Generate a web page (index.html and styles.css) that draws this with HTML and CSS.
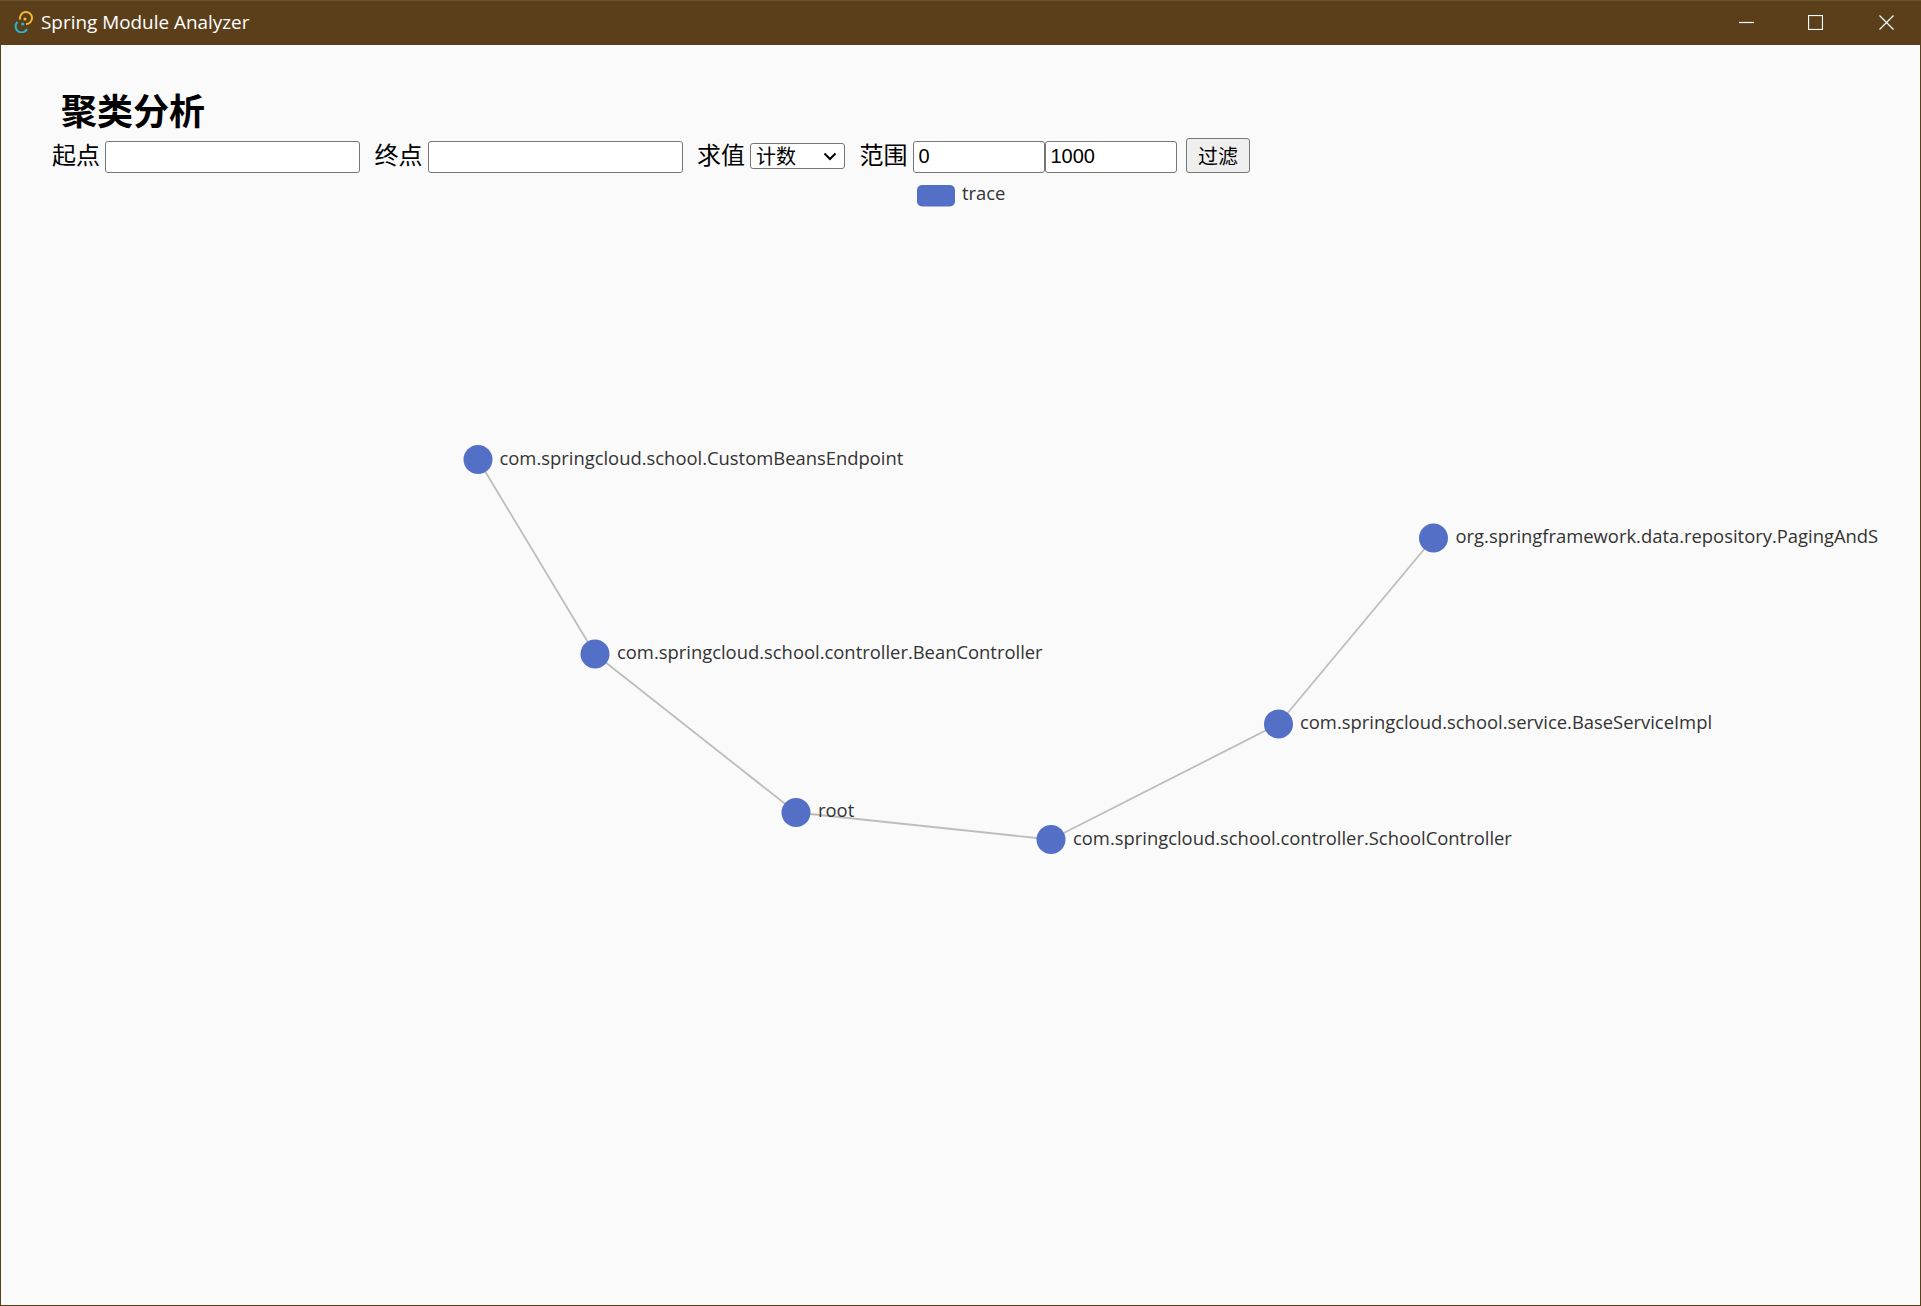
FILE: index.html
```html
<!DOCTYPE html>
<html lang="zh-CN">
  <head>
    <meta charset="utf-8" />
    <meta name="viewport" content="width=device-width, initial-scale=1" />
    <title>Spring Module Analyzer</title>
    <link rel="stylesheet" href="styles.css">
  </head>
  <body>
    <div class="window">
      <header class="titlebar">
        <svg class="app-icon" width="20" height="22" viewBox="0 0 20 22">
          <path class="swirl-top" d="M6.2 8.5 A6 6 0 1 1 12 13" />
          <path class="swirl-bottom" d="M3.5 11 A6 6 0 1 0 13 18" />
          <circle class="dot-top" cx="11" cy="8" r="1.6" />
          <circle class="dot-bottom" cx="8.7" cy="13" r="1.6" />
        </svg>
        <span class="app-name">Spring Module Analyzer</span>
        <div class="window-controls">
          <svg class="control min" width="15" height="15" viewBox="0 0 15 15"><path d="M0 7.5H15" /></svg>
          <svg class="control max" width="15" height="15" viewBox="0 0 15 15"><rect x="0.5" y="0.5" width="14" height="14" /></svg>
          <svg class="control" width="15" height="15" viewBox="0 0 15 15"><path d="M0.5 0.5L14.5 14.5M14.5 0.5L0.5 14.5" /></svg>
        </div>
      </header>

      <main class="content">
        <h1 class="page-title">聚类分析</h1>
        <form class="filters">
          <div class="field">
            <label for="start">起点</label>
            <input class="text-input wide" type="text" id="start" />
          </div>
          <div class="field">
            <label for="end">终点</label>
            <input class="text-input wide" type="text" id="end" />
          </div>
          <div class="field">
            <label for="agg">求值</label>
            <select class="agg-select" id="agg">
              <option>计数</option>
            </select>
          </div>
          <div class="field">
            <label for="min">范围</label>
            <div class="range">
              <input class="text-input narrow" type="text" id="min" value="0" />
              <input class="text-input narrow" type="text" id="max" value="1000" />
            </div>
          </div>
          <button class="filter-btn" type="button">过滤</button>
        </form>
      </main>

      <!-- graph uses page coordinates, see viewBox -->
      <svg class="graph" width="1919" height="1132" viewBox="1 173 1919 1132">
        <rect class="legend-swatch" x="917" y="185" width="38" height="21.5" rx="5" />
        <text class="legend-text" x="962" y="200">trace</text>

        <g class="edges">
          <line x1="478" y1="459.5" x2="595" y2="654" />
          <line x1="595" y1="654" x2="796" y2="812.5" />
          <line x1="796" y1="812.5" x2="1051" y2="839.5" />
          <line x1="1051" y1="839.5" x2="1278.5" y2="724" />
          <line x1="1278.5" y1="724" x2="1433.5" y2="538" />
        </g>

        <g class="nodes">
          <circle cx="478" cy="459.5" r="14.5" />
          <circle cx="595" cy="654" r="14.5" />
          <circle cx="796" cy="812.5" r="14.5" />
          <circle cx="1051" cy="839.5" r="14.5" />
          <circle cx="1278.5" cy="724" r="14.5" />
          <circle cx="1433.5" cy="538" r="14.5" />
        </g>

        <g class="labels">
          <text x="499.5" y="465">com.springcloud.school.CustomBeansEndpoint</text>
          <text x="617" y="659">com.springcloud.school.controller.BeanController</text>
          <text x="818" y="817">root</text>
          <text x="1073" y="845">com.springcloud.school.controller.SchoolController</text>
          <text x="1300" y="729">com.springcloud.school.service.BaseServiceImpl</text>
          <text x="1455.5" y="543">org.springframework.data.repository.PagingAndS</text>
        </g>
      </svg>
    </div>
  </body>
</html>
```

FILE: styles.css
```css
html, body {
  margin: 0;
  height: 100%;
}

body {
  font-family: "Liberation Sans", "Noto Sans CJK SC", sans-serif;
  overflow: hidden;
}

.window {
  box-sizing: border-box;
  height: 1306px;
  background-color: #fafafa;
  border: 1px solid #5b3f1b;
  border-top: 0;
}

.titlebar {
  display: flex;
  align-items: center;
  height: 45px;
  margin: 0 -1px;
  padding-left: 14px;
  padding-bottom: 2px;
  background-color: #5b3f1b;
  color: #fff;
  box-sizing: border-box;
  border-top: 1px solid #6b5130;
}

.app-icon {
  margin-right: 7px;
}

.swirl-top, .swirl-bottom {
  fill: none;
  stroke-width: 2;
}

.swirl-top { stroke: #f2b632; }
.swirl-bottom { stroke: #27b5cf; }
.dot-top { fill: #f2b632; }
.dot-bottom { fill: #27b5cf; }

.app-name {
  font-family: "Open Sans", "Noto Sans", sans-serif;
  font-size: 18.9px;
}

.window-controls {
  display: flex;
  align-items: center;
  margin-left: auto;
  margin-right: 27px;
}

.control {
  fill: none;
  stroke: #fff;
  stroke-width: 1.2;
}

.control.min { margin-right: 54px; }
.control.max { margin-right: 56px; }

.content {
  padding-top: 42px;
  padding-left: 51px;
}

.page-title {
  margin: 0;
  padding: 0 0 7px 9px;
  font-size: 36px;
  line-height: 44px;
  font-family: "Noto Sans CJK SC", sans-serif;
  font-weight: 700;
  color: #000;
}

.filters {
  display: flex;
  align-items: flex-end;
  height: 35px;
}

.field {
  display: flex;
  align-items: flex-end;
  margin-right: 14.5px;
}

.field label {
  font-size: 24px;
  line-height: 32px;
  height: 35px;
  margin-right: 5px;
  color: #000;
  white-space: nowrap;
  font-family: "Noto Sans CJK SC", sans-serif;
}

.text-input {
  box-sizing: border-box;
  height: 32px;
  padding: 0 5px 2px;
  font-size: 20px;
  font-family: "Liberation Sans", "Noto Sans CJK SC", sans-serif;
  border: 1px solid #767676;
  border-radius: 3px;
  background-color: #fff;
  color: #000;
}

.wide { width: 255px; }
.narrow { width: 132px; }

.range {
  display: flex;
  margin-right: -5px;
}

/* native arrow is too small at this size, so draw the chevron */
.agg-select {
  box-sizing: border-box;
  width: 95px;
  height: 26px;
  margin-bottom: 4px;
  padding: 0 0 0 5px;
  appearance: none;
  font-size: 20px;
  line-height: 24px;
  font-family: "Noto Sans CJK SC", sans-serif;
  border: 1px solid #767676;
  border-radius: 3px;
  background-color: #fff;
  background-image: url("data:image/svg+xml,%3Csvg xmlns='http://www.w3.org/2000/svg' width='14' height='9' viewBox='0 0 14 9'%3E%3Cpath d='M1.5 1.5L7 7L12.5 1.5' fill='none' stroke='%23000' stroke-width='2'/%3E%3C/svg%3E");
  background-repeat: no-repeat;
  background-position: right 7px center;
  color: #000;
}

.filter-btn {
  box-sizing: border-box;
  width: 64px;
  height: 35px;
  padding: 0;
  font-size: 20px;
  font-family: "Noto Sans CJK SC", sans-serif;
  border: 1px solid #767676;
  border-radius: 3px;
  background-color: #efefef;
  color: #000;
}

.graph {
  display: block;
}

.legend-swatch, .nodes circle {
  fill: #5470c6;
}

.legend-text, .labels text {
  font-family: "Open Sans", "Noto Sans", sans-serif;
  font-size: 18.4px;
  fill: #333;
}

.edges line {
  stroke: #bdbdbd;
  stroke-width: 1.8;
}
```
